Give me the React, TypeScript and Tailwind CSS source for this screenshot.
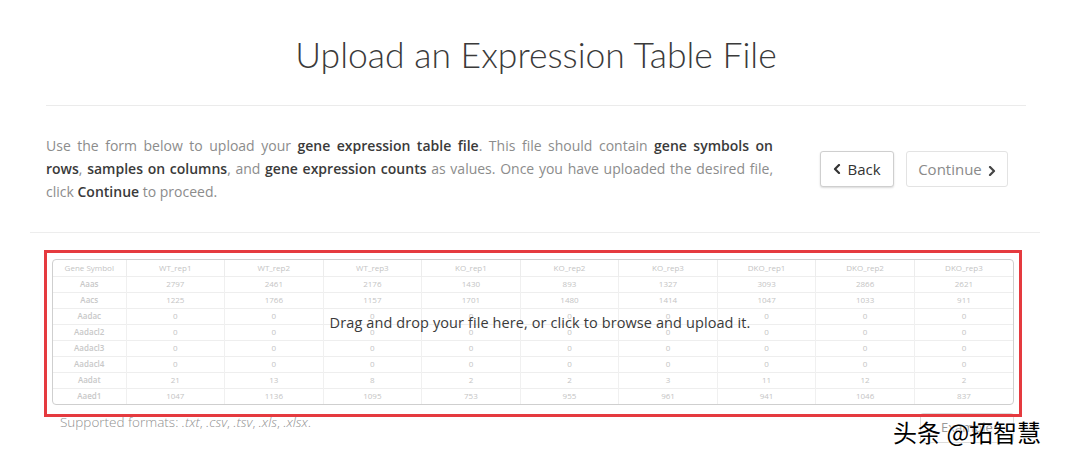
import React from 'react';

const HEADERS = ['Gene Symbol', 'WT_rep1', 'WT_rep2', 'WT_rep3', 'KO_rep1', 'KO_rep2', 'KO_rep3', 'DKO_rep1', 'DKO_rep2', 'DKO_rep3'];

const ROWS: [string, number[]][] = [
    ['Aaas', [2797, 2461, 2176, 1430, 893, 1327, 3093, 2866, 2621]],
    ['Aacs', [1225, 1766, 1157, 1701, 1480, 1414, 1047, 1033, 911]],
    ['Aadac', [0, 0, 0, 0, 0, 0, 0, 0, 0]],
    ['Aadacl2', [0, 0, 0, 0, 0, 0, 0, 0, 0]],
    ['Aadacl3', [0, 0, 0, 0, 0, 0, 0, 0, 0]],
    ['Aadacl4', [0, 0, 0, 0, 0, 0, 0, 0, 0]],
    ['Aadat', [21, 13, 8, 2, 2, 3, 11, 12, 2]],
    ['Aaed1', [1047, 1136, 1095, 753, 955, 961, 941, 1046, 837]],
];

const Chevron: React.FC<{ dir: 'left' | 'right' }> = ({ dir }) => (
    <svg width="8" height="10" viewBox="0 0 8 10" className="inline-block">
        <path
            d={dir === 'left' ? 'M6 1 L2 5 L6 9' : 'M2 1 L6 5 L2 9'}
            fill="none"
            stroke="currentColor"
            strokeWidth="2.2"
            strokeLinecap="round"
            strokeLinejoin="round"
        />
    </svg>
);

const B: React.FC<{ children: React.ReactNode }> = ({ children }) => (
    <b className="font-semibold text-[#3a3a3a]">{children}</b>
);

const PreviewTable: React.FC = () => (
    <div className="rounded-[4px] border border-[#cfcfcf] overflow-hidden">
        <table className="w-full table-fixed border-collapse text-[8px] text-[#c4c4c4] text-center">
            <colgroup>
                <col className="w-[73px]" />
            </colgroup>
            <thead>
                <tr className="h-[16px]">
                    {HEADERS.map((h, i) => (
                        <th key={h} className={`font-normal ${i > 0 ? 'border-l border-[#ececec]' : ''}`}>
                            {h}
                        </th>
                    ))}
                </tr>
            </thead>
            <tbody>
                {ROWS.map(([gene, vals]) => (
                    <tr key={gene} className="h-[16px] border-t border-[#eeeeee]">
                        <td className="font-semibold text-[#c8c8c8]">{gene}</td>
                        {vals.map((v, i) => (
                            <td key={i} className="border-l border-[#f0f0f0]">{v}</td>
                        ))}
                    </tr>
                ))}
            </tbody>
        </table>
    </div>
);

export default function App() {
    return (
        <div className="relative w-[1080px] h-[464px] bg-white overflow-hidden font-['Open_Sans',sans-serif] text-[#333]">
            <div className="ml-[46px] w-[980px]">
                <h1 className="pt-[33px] text-center text-[35.5px] leading-[44px] font-light font-['Lato',sans-serif] text-[#3a3a3a]">
                    Upload an Expression Table File
                </h1>
                <div className="mt-[28px] h-px bg-[#ebebeb]" />
                <div className="flex items-center mt-[28px]">
                    <p className="w-[727px] text-[14px] leading-[23px] text-[#8c8c8c] text-justify">
                        <span className="block [text-align-last:justify]">
                            Use the form below to upload your <B>gene expression table file</B>. This file should contain <B>gene symbols on</B>
                        </span>
                        <span className="block [text-align-last:justify]">
                            <B>rows</B>, <B>samples on columns</B>, and <B>gene expression counts</B> as values. Once you have uploaded the desired file,
                        </span>
                        <span className="block">
                            click <B>Continue</B> to proceed.
                        </span>
                    </p>
                    <div className="flex gap-[12px] ml-[47px] mt-[1px]">
                        <button className="flex items-center gap-[6px] h-[36px] w-[74px] justify-center rounded-[3px] border border-[#cfcfcf] bg-white text-[15px] text-[#333] shadow-[0_1px_2px_rgba(0,0,0,0.15)]">
                            <Chevron dir="left" />
                            Back
                        </button>
                        <button className="flex items-center gap-[6px] h-[36px] w-[102px] justify-center rounded-[3px] border border-[#e3e3e3] bg-white text-[15px] text-[#8a8a8a]">
                            Continue
                            <span className="text-[#444]"><Chevron dir="right" /></span>
                        </button>
                    </div>
                </div>
            </div>
            <div className="ml-[30px] w-[1010px] mt-[29px] h-px bg-[#ededed]" />

            <div className="relative ml-[44px] w-[978px] mt-[17px] pt-[9px] px-[8px]">
                <div className="relative cursor-pointer">
                    <PreviewTable />
                    <div className="absolute inset-0 flex items-center justify-center">
                        <span className="text-[14.5px] text-[#3a3a3a] tracking-[0.1px] -mt-[18px] ml-[14px]">
                            Drag and drop your file here, or click to browse and upload it.
                        </span>
                    </div>
                </div>
                <div className="flex items-start justify-between mt-[8px] pl-[8px]">
                    <p className="text-[13.5px] font-light text-[#909090] leading-[18px]">
                        Supported formats: <i>.txt</i>, <i>.csv</i>, <i>.tsv</i>, <i>.xls</i>, <i>.xlsx</i>.
                    </p>
                    <button className="w-[94px] h-[30px] rounded-[3px] border border-[#dcdcdc] text-[13px] text-[#999]">
                        Example
                    </button>
                </div>
                <div className="absolute left-0 top-0 w-[978px] h-[167px] border-[3px] border-[#e53a3f] pointer-events-none" />
            </div>

            <div className="absolute left-[893px] top-[416px] text-[24px] leading-[32px] text-black font-['Noto_Sans_CJK_SC',sans-serif] [text-shadow:0_0_2px_#fff,0_0_2px_#fff]">
                头条 @拓智慧
            </div>
        </div>
    );
}
